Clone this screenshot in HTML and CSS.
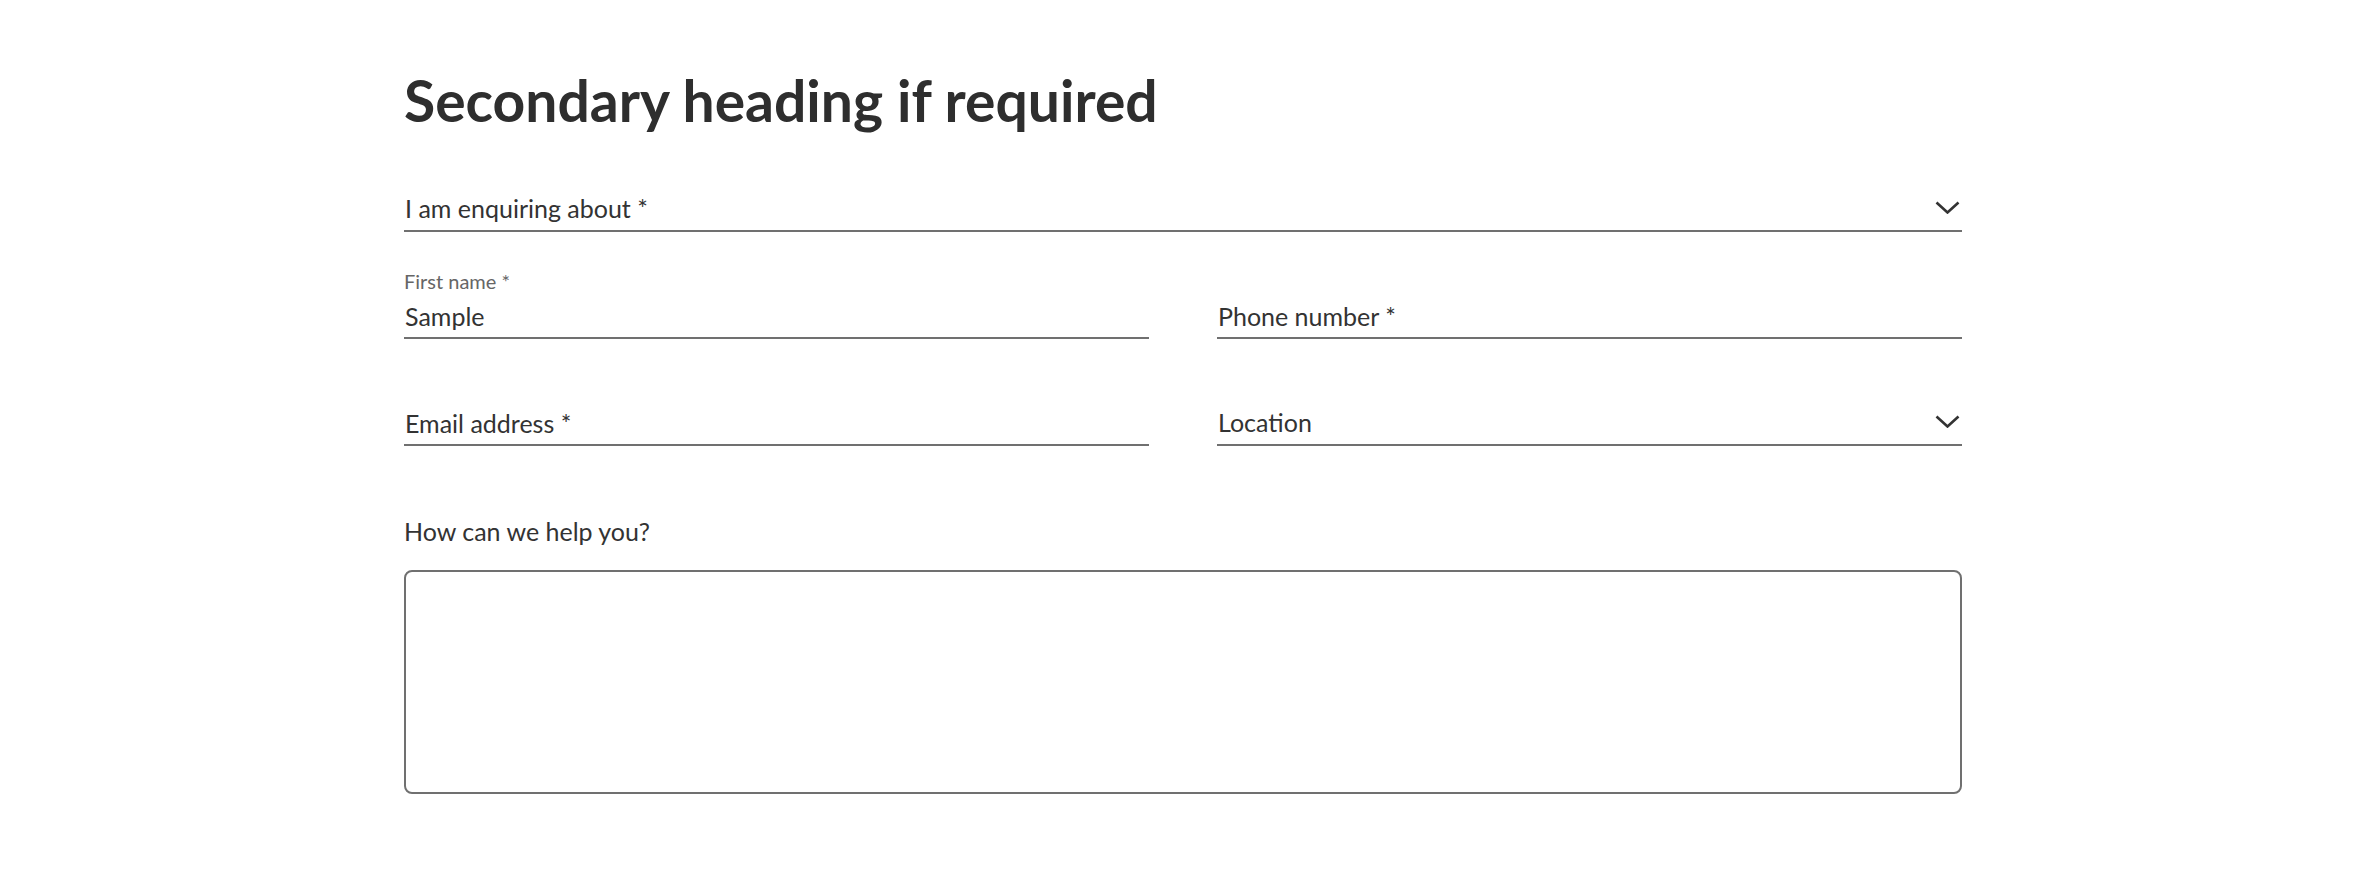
FILE: index.html
```html
<!DOCTYPE html>
<html lang="en">
<head>
    <meta charset="UTF-8">
    <meta name="viewport" content="width=device-width, initial-scale=1.0">
    <title>Contact</title>
    <link rel="stylesheet" href="styles.css">
</head>
<body>
    <main class="contact">
        <h2 class="contact-title">Secondary heading if required</h2>
        <form class="contact-form">
            <!-- Enquiry type -->
            <div class="field">
                <select class="field-input" id="enquiry" name="enquiry" required>
                    <option value="">I am enquiring about *</option>
                    <option value="sales">Sales</option>
                    <option value="support">Support</option>
                </select>
                <svg class="field-chevron" viewBox="0 0 25 13" aria-hidden="true">
                    <polyline points="1.5,1.5 12.5,11.5 23.5,1.5"></polyline>
                </svg>
            </div>

            <div class="form-row">
                <div class="field">
                    <label class="field-label" for="first_name">First name *</label>
                    <input class="field-input" type="text" id="first_name" name="first_name" value="Sample" required>
                </div>
                <div class="field">
                    <input class="field-input" type="tel" id="phone" name="phone" placeholder="Phone number *" required>
                </div>
            </div>

            <div class="form-row">
                <div class="field">
                    <input class="field-input" type="email" id="email" name="email" placeholder="Email address *" required>
                </div>
                <div class="field">
                    <select class="field-input" id="location" name="location">
                        <option value="">Location</option>
                        <option value="north">North</option>
                        <option value="south">South</option>
                    </select>
                    <svg class="field-chevron" viewBox="0 0 25 13" aria-hidden="true">
                        <polyline points="1.5,1.5 12.5,11.5 23.5,1.5"></polyline>
                    </svg>
                </div>
            </div>

            <!-- Message -->
            <div class="message-field">
                <label class="message-label" for="message">How can we help you?</label>
                <textarea class="message-box" id="message" name="message"></textarea>
            </div>
        </form>
    </main>
</body>
</html>
```

FILE: styles.css
```css
body {
    margin: 0;
    font-family: Lato, "Liberation Sans", sans-serif;
    color: #333;
    background-color: #fff;
}
.contact {
    max-width: 1558px;
    margin: 0 auto;
    padding-top: 67px;
}
.contact-title {
    margin: 0 0 28px;
    font-size: 57px;
    line-height: 67px;
    font-weight: 700;
    color: #2e2e2e;
}
.contact-form {
    display: flex;
    flex-direction: column;
    gap: 37px;
}
.form-row {
    display: grid;
    grid-template-columns: 1fr 1fr;
    column-gap: 68px;
}
.field {
    position: relative;
    height: 70px;
    box-sizing: border-box;
    display: flex;
    flex-direction: column;
    justify-content: flex-end;
    padding-bottom: 6px;
    border-bottom: 2px solid #707070;
}
.field-label {
    margin-bottom: 8px;
    font-size: 20px;
    line-height: 24px;
    color: #666;
}
.field-input {
    height: 30px;
    margin: 0;
    padding: 0 1px;
    border: none;
    outline: none;
    background: transparent;
    font-family: inherit;
    font-size: 25px;
    line-height: 30px;
    color: #333;
}
.field-input::placeholder {
    color: #333;
    opacity: 1;
}
select.field-input {
    margin-bottom: 1px;
    appearance: none;
    -webkit-appearance: none;
    cursor: pointer;
}
.field-chevron {
    position: absolute;
    right: 2px;
    bottom: 16px;
    width: 25px;
    height: 13px;
    fill: none;
    stroke: #333;
    stroke-width: 2.6;
    pointer-events: none;
}
.message-field {
    margin-top: 33px;
    display: flex;
    flex-direction: column;
}
.message-label {
    margin-bottom: 24px;
    font-size: 25px;
    line-height: 30px;
}
.message-box {
    height: 224px;
    box-sizing: border-box;
    border: 2px solid #707070;
    border-radius: 8px;
    resize: none;
    font-family: inherit;
    font-size: 25px;
}
```
